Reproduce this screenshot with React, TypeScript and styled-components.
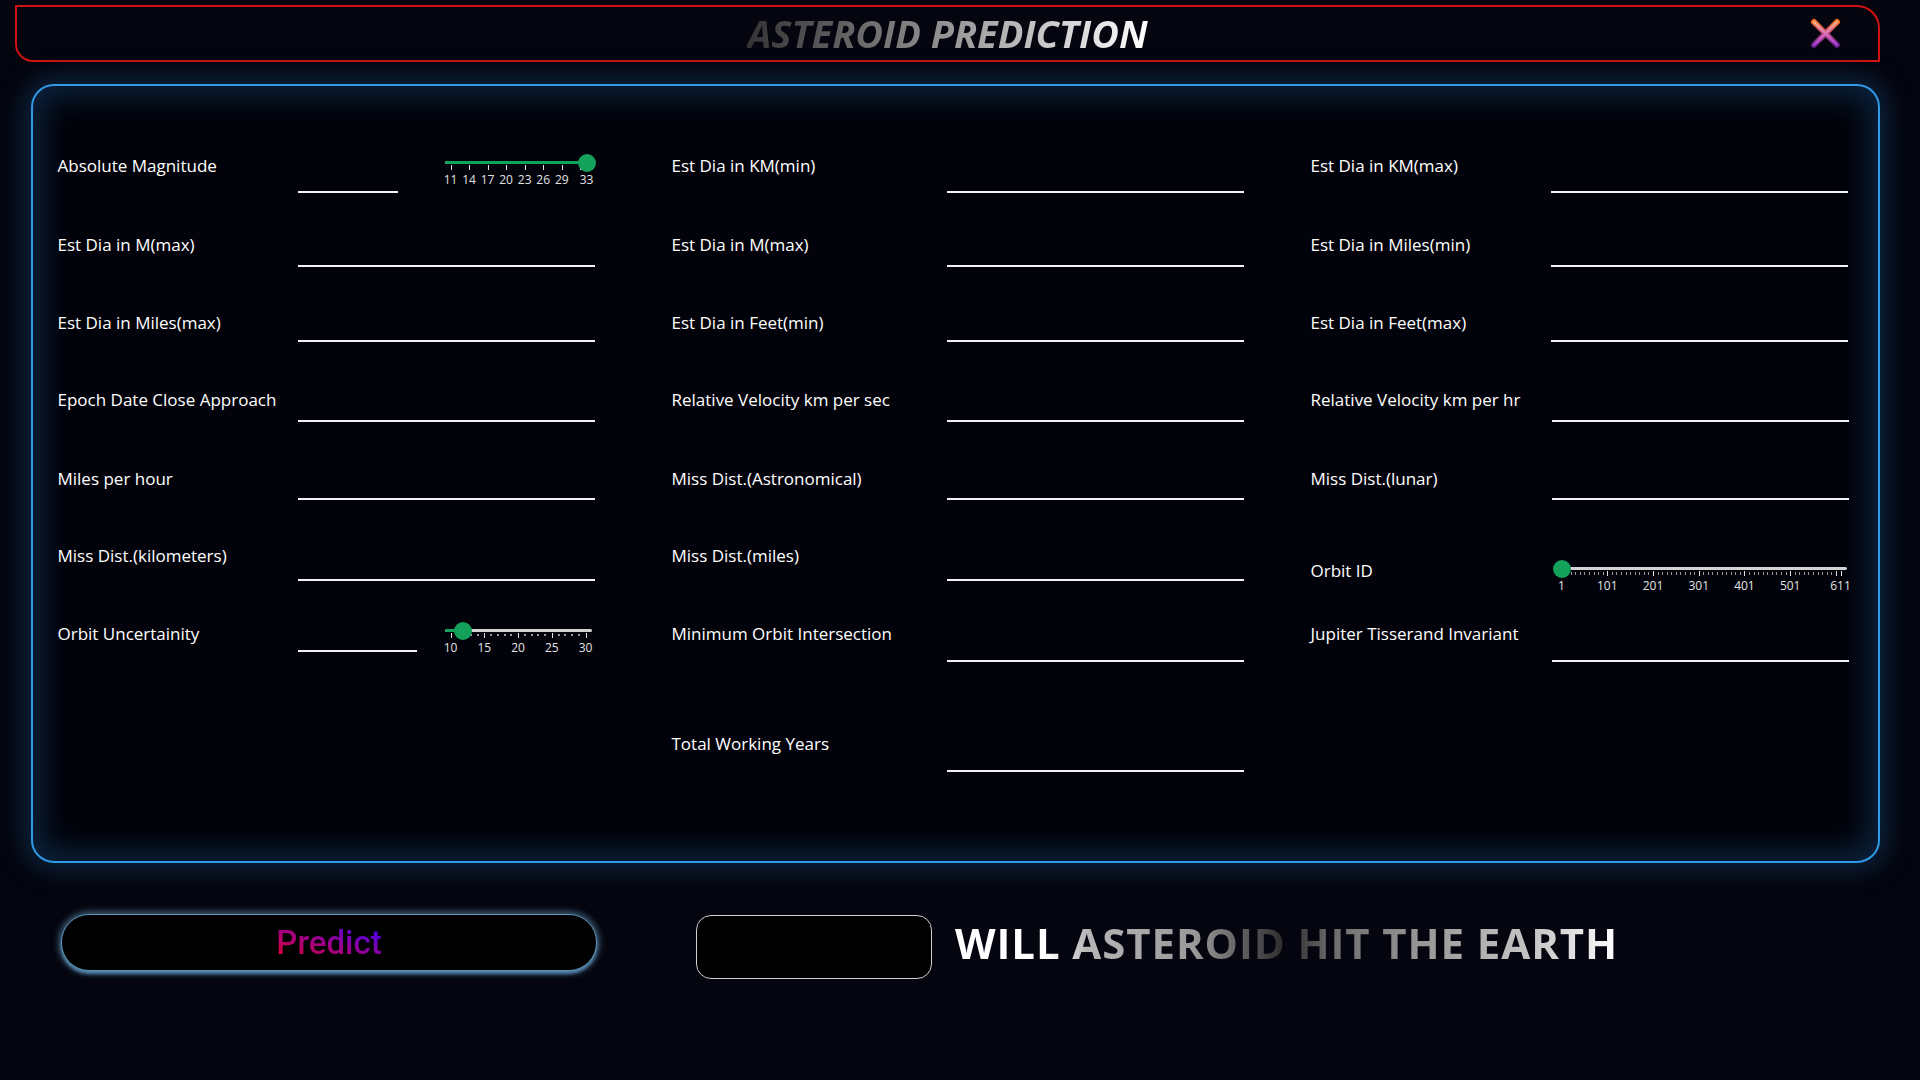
import React from 'react';
import styled, { createGlobalStyle } from 'styled-components';

const GlobalStyle = createGlobalStyle`
    html, body {
        margin: 0;
        padding: 0;
        background: #04050e;
        min-height: 100vh;
    }
    body {
        font-family: 'Open Sans', 'Noto Sans', sans-serif;
        color: #fff;
    }
    * {
        box-sizing: border-box;
    }
`;

const Page = styled.div`
    width: 1920px;
    height: 1080px;
    overflow: hidden;
    background: #04050e;
`;

const Header = styled.div`
    display: grid;
    grid-template-columns: 1fr auto 1fr;
    align-items: center;
    height: 57px;
    margin: 5px 40px 0 15px;
    border: 2px solid #d21313;
    border-radius: 0 23px 0 18px;
    background: #04050e;
`;

const Title = styled.h1`
    grid-column: 2;
    margin: 0 0 2px;
    font-family: 'Open Sans', sans-serif;
    font-style: italic;
    font-weight: 700;
    font-size: 38px;
    letter-spacing: 0;
    line-height: 1;
    background: linear-gradient(90deg, #333 0%, #8a8a8a 45%, #fff 100%);
    -webkit-background-clip: text;
    background-clip: text;
    color: transparent;
`;

const CloseButton = styled.button`
    justify-self: end;
    margin-right: 36px;
    width: 33px;
    height: 33px;
    padding: 0;
    border: 0;
    background: none;
    display: flex;
    align-items: center;
    justify-content: center;
`;

const Panel = styled.div`
    height: 779px;
    margin: 22px 40px 0 31px;
    padding: 50px 0 0 24.5px;
    border: 2px solid #2f9be6;
    border-radius: 23px;
    background: #02030a;
    box-shadow: 0 0 26px 6px rgba(20, 66, 112, 0.55), inset 0 0 30px 8px rgba(20, 66, 112, 0.55);
`;

const Row = styled.div<{ $h: number }>`
    display: grid;
    grid-template-columns: 614px 639px 537px;
    height: ${p => p.$h}px;
`;

const Field = styled.div<{ $labelW: number }>`
    display: grid;
    grid-template-columns: ${p => p.$labelW}px 297px;
    align-items: start;
`;

const Label = styled.label<{ $y: number }>`
    margin-top: ${p => p.$y - 12}px;
    font-size: 17px;
    line-height: 24px;
    color: #fff;
    white-space: nowrap;
`;

const Control = styled.div`
    display: flex;
    align-items: flex-start;
`;

const Input = styled.input<{ $w: number; $line: number }>`
    display: block;
    width: ${p => p.$w}px;
    height: 28px;
    margin-top: ${p => p.$line - 27}px;
    padding: 0 2px;
    border: 0;
    border-bottom: 2px solid #f2f2f2;
    background: transparent;
    color: #fff;
    font-family: inherit;
    font-size: 16px;
    outline: none;
`;

const SliderBox = styled.div<{ $w: number; $top: number; $left: number }>`
    position: relative;
    width: ${p => p.$w}px;
    height: 34px;
    margin-top: ${p => p.$top}px;
    margin-left: ${p => p.$left}px;
`;

const Track = styled.div`
    position: absolute;
    top: 0;
    left: 0;
    right: 0;
    height: 3px;
    border-radius: 2px;
    background: #d2d2d2;
`;

const Fill = styled.div`
    position: absolute;
    top: 0;
    left: 0;
    height: 3px;
    border-radius: 2px;
    background: #14a35d;
`;

const Thumb = styled.div`
    position: absolute;
    top: -7.5px;
    width: 18px;
    height: 18px;
    margin-left: -9px;
    border-radius: 50%;
    background: #13a15b;
`;

const Tick = styled.div<{ $major: boolean; $dot: boolean }>`
    position: absolute;
    width: ${p => (p.$dot ? 2 : 1)}px;
    top: ${p => (p.$dot ? 5 : p.$major ? 4 : 5)}px;
    height: ${p => (p.$dot ? 2 : p.$major ? 5 : 3)}px;
    background: ${p => (p.$major ? '#e4e4e4' : '#9a9a9a')};
`;

const TickLabel = styled.span`
    position: absolute;
    top: 11px;
    transform: translateX(-50%);
    font-size: 12px;
    line-height: 16px;
    color: #e2e2e2;
    white-space: nowrap;
`;

const Footer = styled.div`
    display: flex;
    align-items: flex-start;
    margin-top: 51px;
    padding-left: 61px;
`;

const PredictButton = styled.button`
    width: 536px;
    height: 57px;
    border-radius: 28px;
    border: 1px solid #5d93b4;
    background: #000;
    box-shadow: 0 0 7px 2px rgba(120, 180, 225, 0.55), 0 3px 3px rgba(100, 165, 215, 0.6);
    display: flex;
    align-items: center;
    justify-content: center;
    cursor: pointer;
`;

const PredictText = styled.span`
    font-family: Roboto, 'Liberation Sans', sans-serif;
    font-weight: 500;
    font-size: 33px;
    background: linear-gradient(to top right, #e0001f 0%, #9a0090 50%, #3300ff 100%);
    -webkit-background-clip: text;
    background-clip: text;
    color: transparent;
`;

const ResultBox = styled.div`
    width: 236px;
    height: 64px;
    margin: 1px 0 0 99px;
    border: 1px solid #cfcfcf;
    border-radius: 15px;
    background: #000;
`;

const Question = styled.div`
    margin: 3px 0 0 23px;
    font-family: 'Open Sans', sans-serif;
    font-weight: 700;
    font-size: 42px;
    line-height: 52px;
    letter-spacing: 0.9px;
    background: linear-gradient(
        90deg,
        #fff 0%,
        #fff 14%,
        #b5b5b5 20%,
        #9a9a9a 36%,
        #5a5a5a 44%,
        #2a2a2a 50%,
        #6e6e6e 57%,
        #9c9c9c 72%,
        #c8c8c8 88%,
        #fff 100%
    );
    -webkit-background-clip: text;
    background-clip: text;
    color: transparent;
`;

type TickSpec = { v: number; major: boolean; dot?: boolean };

interface SliderProps {
    width: number;
    top: number;
    left: number;
    min: number;
    max: number;
    value: number;
    ticks: TickSpec[];
    labels: number[];
}

const Slider = ({ width, top, left, min, max, value, ticks, labels }: SliderProps) => {
    const x = (v: number) => 6 + ((v - min) / (max - min)) * (width - 12);
    return (
        <SliderBox $w={width} $top={top} $left={left}>
            <Track />
            <Fill style={{ width: x(value) }} />
            {ticks.map(t => (
                <Tick key={t.v} $major={t.major} $dot={!!t.dot} style={{ left: x(t.v) - (t.dot ? 1 : 0) }} />
            ))}
            {labels.map(l => (
                <TickLabel key={l} style={{ left: x(l) }}>
                    {l}
                </TickLabel>
            ))}
            <Thumb style={{ left: x(value) }} />
        </SliderBox>
    );
};

const range = (from: number, to: number, step: number) => {
    const out: number[] = [];
    for (let v = from; v <= to; v += step) out.push(v);
    return out;
};

const CloseIcon = () => (
    <svg width="33" height="33" viewBox="0 0 33 33">
        <defs>
            <linearGradient id="xOuter" x1="0" y1="0" x2="0" y2="1">
                <stop offset="0%" stopColor="#ff6a1a" />
                <stop offset="50%" stopColor="#b2427a" />
                <stop offset="100%" stopColor="#5a1f7a" />
            </linearGradient>
            <linearGradient id="xInner" x1="0" y1="0" x2="0" y2="1">
                <stop offset="0%" stopColor="#f5b08a" />
                <stop offset="50%" stopColor="#e072b8" />
                <stop offset="100%" stopColor="#a53ad6" />
            </linearGradient>
        </defs>
        <g strokeLinecap="round">
            <path d="M5 5 L28 28 M28 5 L5 28" stroke="url(#xOuter)" strokeWidth="6" />
            <path d="M5 5 L28 28 M28 5 L5 28" stroke="url(#xInner)" strokeWidth="2.6" />
        </g>
    </svg>
);

const magTicks: TickSpec[] = [...range(11, 32, 3), 33].map(v => ({ v, major: true }));
const uncTicks: TickSpec[] = range(10, 30, 1).map(v => ({ v, major: v % 5 === 0, dot: v % 5 !== 0 }));
const orbitTicks: TickSpec[] = [...range(1, 611, 10), 611].map(v => ({ v, major: (v - 1) % 100 === 0 || v === 611 }));

interface FieldProps {
    label?: string;
    labelW: number;
    labelY?: number;
    children?: React.ReactNode;
}

const FormField = ({ label, labelW, labelY = 30, children }: FieldProps) => (
    <Field $labelW={labelW}>
        <Label $y={labelY}>{label}</Label>
        <Control>{children}</Control>
    </Field>
);

const TextField = ({ label, labelW, line }: { label: string; labelW: number; line: number }) => (
    <FormField label={label} labelW={labelW}>
        <Input $w={297} $line={line} />
    </FormField>
);

export default function App() {
    return (
        <Page>
            <GlobalStyle />
            <Header>
                <Title>ASTEROID PREDICTION</Title>
                <CloseButton aria-label="close">
                    <CloseIcon />
                </CloseButton>
            </Header>

            <Panel>
                <Row $h={79}>
                    <FormField label="Absolute Magnitude" labelW={240}>
                        <Input $w={100} $line={56} />
                        <Slider width={148} top={25} left={47} min={11} max={33} value={33} ticks={magTicks} labels={[11, 14, 17, 20, 23, 26, 29, 33]} />
                    </FormField>
                    <TextField label="Est Dia in KM(min)" labelW={275} line={56} />
                    <TextField label="Est Dia in KM(max)" labelW={240} line={56} />
                </Row>
                <Row $h={78}>
                    <TextField label="Est Dia in M(max)" labelW={240} line={51} />
                    <TextField label="Est Dia in M(max)" labelW={275} line={51} />
                    <TextField label="Est Dia in Miles(min)" labelW={240} line={51} />
                </Row>
                <Row $h={77}>
                    <TextField label="Est Dia in Miles(max)" labelW={240} line={48} />
                    <TextField label="Est Dia in Feet(min)" labelW={275} line={48} />
                    <TextField label="Est Dia in Feet(max)" labelW={240} line={48} />
                </Row>
                <Row $h={79}>
                    <TextField label="Epoch Date Close Approach" labelW={240} line={51} />
                    <TextField label="Relative Velocity km per sec" labelW={275} line={51} />
                    <TextField label="Relative Velocity km per hr" labelW={241} line={51} />
                </Row>
                <Row $h={77}>
                    <TextField label="Miles per hour" labelW={240} line={50} />
                    <TextField label="Miss Dist.(Astronomical)" labelW={275} line={50} />
                    <TextField label="Miss Dist.(lunar)" labelW={241} line={50} />
                </Row>
                <Row $h={78}>
                    <TextField label="Miss Dist.(kilometers)" labelW={240} line={54} />
                    <TextField label="Miss Dist.(miles)" labelW={275} line={54} />
                    <FormField label="Orbit ID" labelW={240} labelY={45}>
                        <Slider width={291} top={41} left={5} min={1} max={611} value={1} ticks={orbitTicks} labels={[1, 101, 201, 301, 401, 501, 611]} />
                    </FormField>
                </Row>
                <Row $h={110}>
                    <FormField label="Orbit Uncertainity" labelW={240}>
                        <Input $w={119} $line={47} />
                        <Slider width={147} top={25} left={28} min={10} max={30} value={11.8} ticks={uncTicks} labels={[10, 15, 20, 25, 30]} />
                    </FormField>
                    <TextField label="Minimum Orbit Intersection" labelW={275} line={57} />
                    <TextField label="Jupiter Tisserand Invariant" labelW={241} line={57} />
                </Row>
                <Row $h={78}>
                    <div />
                    <TextField label="Total Working Years" labelW={275} line={57} />
                    <div />
                </Row>
            </Panel>

            <Footer>
                <PredictButton>
                    <PredictText>Predict</PredictText>
                </PredictButton>
                <ResultBox />
                <Question>WILL ASTEROID HIT THE EARTH</Question>
            </Footer>
        </Page>
    );
}
